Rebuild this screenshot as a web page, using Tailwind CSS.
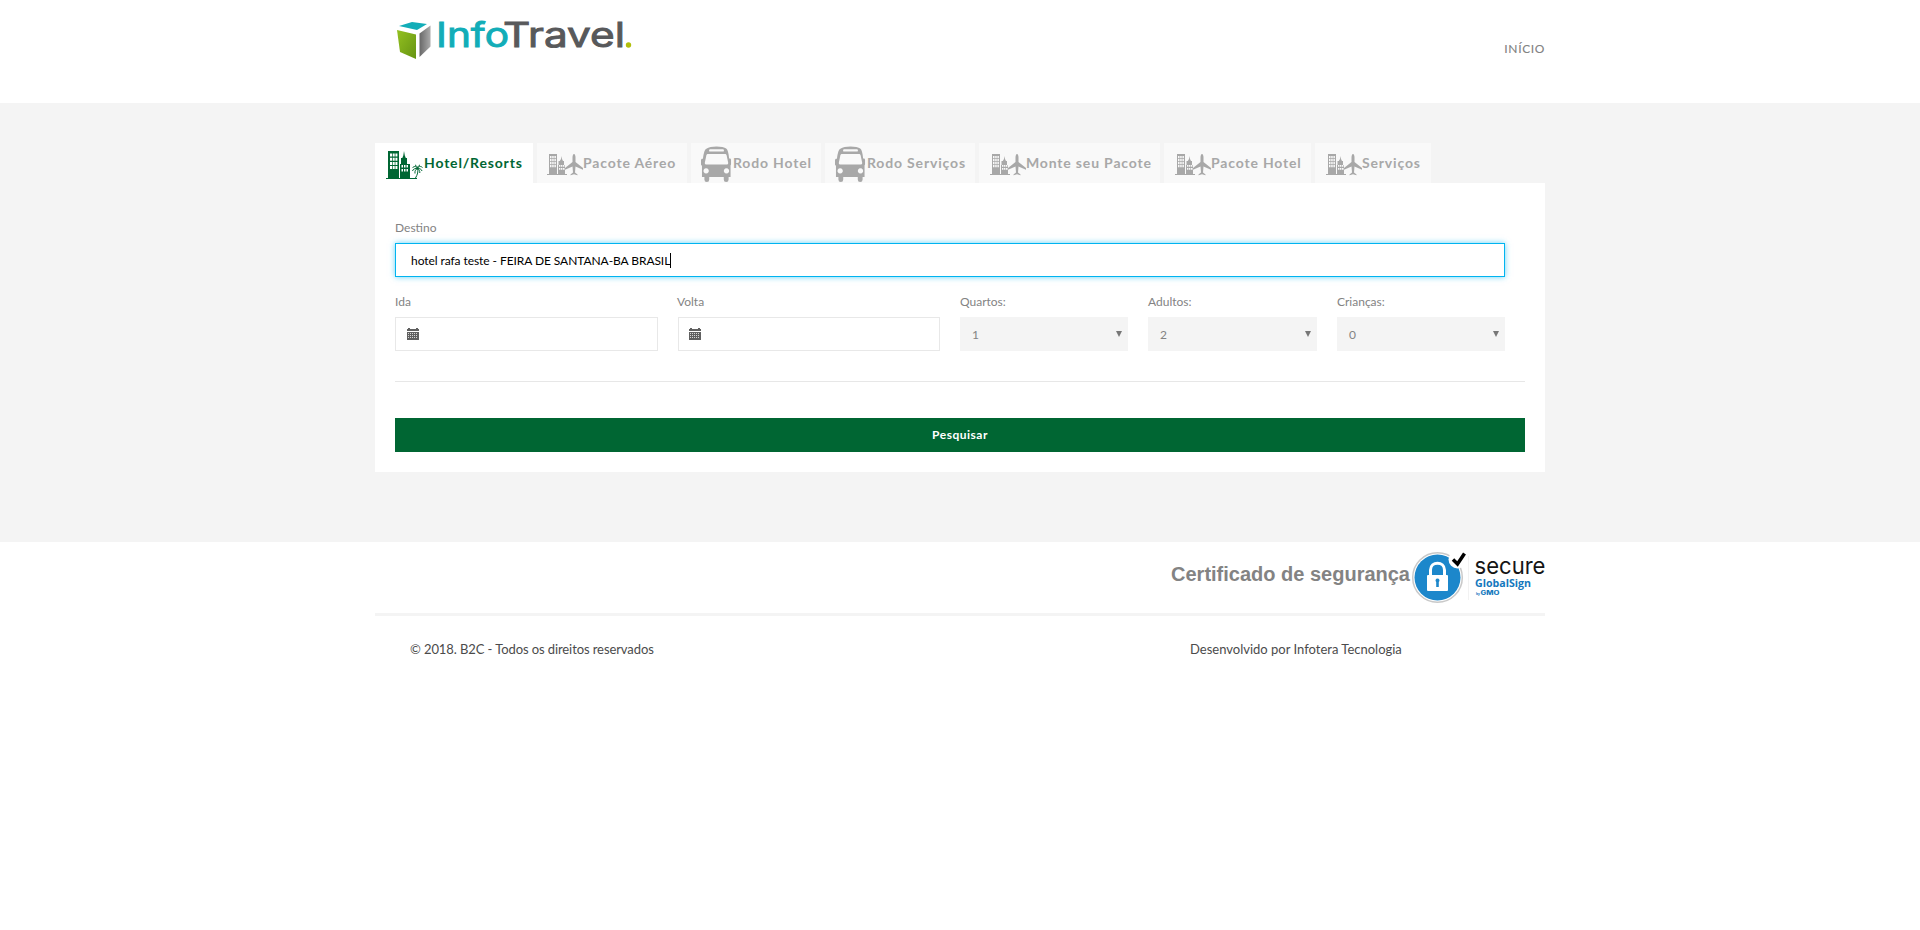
<!DOCTYPE html>
<html lang="pt-BR">
<head>
<meta charset="utf-8">
<title>InfoTravel</title>
<script src="https://cdn.jsdelivr.net/npm/@tailwindcss/browser@4"></script>
</head>
<body class="bg-white font-['Lato',sans-serif] text-[12px] text-[#838383]">
<svg width="0" height="0" class="absolute">
  <defs>
    <symbol id="city" viewBox="0 0 36 22">
      <path fill="currentColor" fill-rule="evenodd" d="M0 20h2V0h8v20h1v-9h.5V7h1.300L14 5l.5-3 .5 3 1 2h1v4h1v9h2v1H0zM3 2h1.500v2.200H3zm2.200 0h1.500v2.200H5.200zm2.200 0h1.500v2.200H7.400zM3 5h1.500v2.200H3zm2.200 0h1.500v2.200H5.200zm2.200 0h1.500v2.200H7.400zM3 8h1.500v2.200H3zm2.200 0h1.500v2.200H5.200zm2.200 0h1.500v2.200H7.400zM3 11h1.500v2.200H3zm2.200 0h1.500v2.200H5.200zm2.200 0h1.500v2.200H7.400zM12 11h1.400v1.800H12zm2 0h1.400v1.800H14zm2 0h1.400v1.800H16zm-4 3h1.400v1.800H12zm2 0h1.400v1.800H14zm2 0h1.400v1.800H16z"/>
      <path fill="currentColor" stroke="#f9f9f9" stroke-width=".6" paint-order="stroke" d="M27 0c1 0 1.500 2 1.500 3.500V8l7.500 6v1.700L28.500 12.500l-.5 6 2.500 2v.8L27 20.300l-3.500 1v-.8l2.500-2-.5-6L18 15.700V14l7.500-6V3.500C25.500 2 26 0 27 0z"/>
    </symbol>
    <symbol id="bus" viewBox="0 0 32 36">
      <path fill="currentColor" fill-rule="evenodd" d="M6 2.500C9-.2 23-.2 26 2.500c1.500 1.200 2 3.500 2.500 6 .2 1 .3 2.500.5 4 1.500-.3 2 .5 2 1.500v4c0 1-.3 1.300-.5 1.300V31h-2v2.500a2.500 2.500 0 0 1-5 0V31h-15v2.500a2.500 2.500 0 0 1-5 0V31H1V19.500c-.6 0-1-.5-1-1.300v-4c0-1 .6-1.700 2-1.500.3-2 .5-4 1-5.500C3.500 5 4 3.500 6 2.500zM9.500 3.200a1.200 1.200 0 0 0 0 2.400h13a1.200 1.200 0 0 0 0-2.400zM7.500 8C6 8 5.700 8.500 5.400 10L4 16.500c-.2 1.300.3 2 1.500 2h21c1.200 0 1.700-.7 1.500-2L26.600 10c-.3-1.500-.6-2-2.100-2zM5.300 22.200a2.700 2.700 0 1 0 .01 0zM26.300 22.200a2.700 2.700 0 1 0 .01 0z"/>
    </symbol>
    <symbol id="calendar" viewBox="0 0 12 12">
      <path fill="#606060" d="M0 1h1V0h2v1h6V0h2v1h1v2H0zM0 4h12v8H0z"/>
      <path stroke="#fff" stroke-opacity=".75" stroke-width="1" stroke-dasharray="1 1" d="M1 5.500h10M1 7.500h10M1 9.500h10"/>
    </symbol>
  </defs>
</svg>

<header class="h-[103px]">
  <div class="mx-auto flex w-[1170px] justify-between pt-5 pl-5">
    <svg class="overflow-visible" width="240" height="42" viewBox="0 0 240 42" aria-label="InfoTravel">
      <defs>
        <linearGradient id="green" x2="1" y2="1"><stop stop-color="#94c120"/><stop offset="1" stop-color="#669413"/></linearGradient>
        <linearGradient id="gray" x2="1"><stop stop-color="#686868"/><stop offset="1" stop-color="#aaa"/></linearGradient>
      </defs>
      <path fill="#12adb8" d="M4 6l13-4 15 2-10 6z"/>
      <path fill="url(#green)" d="M2 10l19 4.500V39L5 32z"/>
      <path fill="url(#gray)" d="M24.500 13.500l11-8v21L24.500 37z"/>
      <g font-family="Inter" font-size="33.500" font-weight="400" stroke-width=".9">
        <text x="41" y="27" textLength="73" lengthAdjust="spacingAndGlyphs" fill="#12adb8" stroke="#12adb8">Info</text>
        <text x="108" y="27" textLength="122" lengthAdjust="spacingAndGlyphs" fill="#58595b" stroke="#58595b">Travel</text>
      </g>
      <circle cx="233.500" cy="25" r="2.700" fill="#b1bf0c"/>
    </svg>
    <nav class="pt-[21px] text-[12px] leading-4 font-medium tracking-[0.6px]"><a>INÍCIO</a></nav>
  </div>
</header>

<main class="h-[439px] bg-[#f4f4f4] pt-10">
  <div class="mx-auto w-[1170px]">
    <div class="flex h-10 gap-1 text-[14px] font-bold tracking-[0.83px] text-[#a8a8a8]">
      <div class="flex w-[158px] items-center bg-white pl-[11px] text-[#006633]">
        <svg class="mt-1 mr-px shrink-0" width="37" height="30" viewBox="0 0 37 30">
          <path fill="currentColor" fill-rule="evenodd" d="M0 28h2V1h11v27h1V14h1V8h1.300l1-2.500L18 1l.8 4.500 1 2.500H21v6h3v14h7v1H0zM4 3.500h2v3H4zm2.700 0h2v3h-2zm2.700 0h2v3h-2zM4 7.700h2v3H4zm2.700 0h2v3h-2zm2.700 0h2v3h-2zM4 11.900h2v3H4zm2.700 0h2v3h-2zm2.700 0h2v3h-2zM4 16.100h2v3H4zm2.700 0h2v3h-2zm2.700 0h2v3h-2zM15.500 15H17v2.500h-1.500zm2.500 0h1.500v2.500H18zm2.500 0H22v2.500h-1.500zm-5 4H17v2.500h-1.500zm2.500 0h1.500v2.500H18zm2.500 0H22v2.500h-1.500z"/>
          <path fill="none" stroke="currentColor" stroke-width="1" d="M31.500 18.500c1 3 0 6-2 9.500M31.500 18.500c-1-2.500-4-2.500-5-.5M31.500 18.500c-2-.5-4.500.5-5 2.500M31.500 18.500c-1.500.5-3 2.500-2.500 5M31.500 18.500c1-2.500 3.500-2.500 5-1M31.500 18.500c2 0 4 .5 4.500 2.500M31.500 18.500c1.500 1 2.500 2.500 2.300 4.500M31.500 18.500c-.5-2-1-3-2.500-3.500M31.500 18.500c.5-2 1-3 2.500-3.500"/>
        </svg><span class="pb-0.5">Hotel/Resorts</span></div>
      <div class="flex w-[150px] items-center bg-[#f9f9f9] pl-[10px]"><svg class="mt-1 shrink-0" width="36" height="22"><use href="#city"/></svg><span class="pb-0.5">Pacote Aéreo</span></div>
      <div class="flex w-[130px] items-center bg-[#f9f9f9] pl-[10px]"><svg class="mt-[2px] mr-px shrink-0" width="31" height="36" viewBox="0 0 32 36" preserveAspectRatio="none"><use href="#bus"/></svg><span class="pb-0.5">Rodo Hotel</span></div>
      <div class="flex w-[150px] items-center bg-[#f9f9f9] pl-[10px]"><svg class="mt-[2px] mr-px shrink-0" width="31" height="36" viewBox="0 0 32 36" preserveAspectRatio="none"><use href="#bus"/></svg><span class="pb-0.5">Rodo Serviços</span></div>
      <div class="flex w-[181px] items-center bg-[#f9f9f9] pl-[11px]"><svg class="mt-1 shrink-0" width="36" height="22"><use href="#city"/></svg><span class="pb-0.5">Monte seu Pacote</span></div>
      <div class="flex w-[147px] items-center bg-[#f9f9f9] pl-[11px]"><svg class="mt-1 shrink-0" width="36" height="22"><use href="#city"/></svg><span class="pb-0.5">Pacote Hotel</span></div>
      <div class="flex w-[116px] items-center bg-[#f9f9f9] pl-[11px]"><svg class="mt-1 shrink-0" width="36" height="22"><use href="#city"/></svg><span class="pb-0.5">Serviços</span></div>
    </div>

    <form class="h-[289px] bg-white px-5 pt-[35px]">
      <div class="h-[25px] leading-5">Destino</div>
      <div class="flex h-[34px] w-[1110px] items-center border border-[#00b4f0] pl-[15px] text-black shadow-[0_0_6px_rgba(0,180,240,0.6)]">
        <span class="pt-0.5 tracking-[-0.07px]">hotel rafa teste - FEIRA DE SANTANA-BA BRASIL</span><span class="h-[15px] w-px bg-black"></span>
      </div>
      <div class="mt-[15px] flex w-[1110px]">
        <div class="mr-5 w-[263px]"><div class="h-[25px] leading-5">Ida</div><div class="flex h-[34px] items-center border border-[#e8e8e8] pl-[11px]"><svg width="12" height="12"><use href="#calendar"/></svg></div></div>
        <div class="mr-5 w-[262px]"><div class="-ml-px h-[25px] leading-5">Volta</div><div class="flex h-[34px] items-center border border-[#e8e8e8] pl-[10px]"><svg width="12" height="12"><use href="#calendar"/></svg></div></div>
        <div class="mr-5 w-[168px]"><div class="h-[25px] leading-5">Quartos:</div><div class="flex h-[34px] items-center justify-between bg-[#f4f4f4] pr-[6px] pl-3 text-[12px]"><span class="pt-0.5">1</span><svg width="6" height="6"><path d="M0 0h6L3 6z" fill="#777"/></svg></div></div>
        <div class="mr-5 w-[169px]"><div class="h-[25px] leading-5">Adultos:</div><div class="flex h-[34px] items-center justify-between bg-[#f4f4f4] pr-[6px] pl-3 text-[12px]"><span class="pt-0.5">2</span><svg width="6" height="6"><path d="M0 0h6L3 6z" fill="#777"/></svg></div></div>
        <div class="w-[168px]"><div class="h-[25px] leading-5">Crianças:</div><div class="flex h-[34px] items-center justify-between bg-[#f4f4f4] pr-[6px] pl-3 text-[12px]"><span class="pt-0.5">0</span><svg width="6" height="6"><path d="M0 0h6L3 6z" fill="#777"/></svg></div></div>
      </div>
      <hr class="mt-[30px] border-[#e7e7e7]">
      <button type="button" class="mt-9 block h-[34px] w-full bg-[#006633] text-[12px] font-bold tracking-[0.5px] text-white">Pesquisar</button>
    </form>
  </div>
</main>

<footer class="mx-auto w-[1170px]">
  <div class="flex h-[71px] justify-end">
    <div class="mr-[2px] pt-[18px] font-['Liberation_Sans',sans-serif] text-[20px] leading-7 font-bold text-[#838383]">Certificado de segurança</div>
    <svg class="mt-[9px] overflow-visible" width="133" height="54" viewBox="0 0 133 54" aria-label="Secure GlobalSign">
      <circle cx="25.500" cy="26.500" r="24.800" fill="#fff" stroke="#c9c9c9" stroke-width="1.500"/>
      <circle cx="25.500" cy="26.500" r="23" fill="#1c87cb"/>
      <circle cx="45.500" cy="8.500" r="9" fill="#fff"/>
      <path d="M41 8.500l4.500 4.500L52.500 2.500" fill="none" stroke="#000" stroke-width="3.500"/>
      <path d="M18.500 24v-5c0-9 14-9 14 0v5" fill="none" stroke="#fff" stroke-width="3"/>
      <rect x="15" y="24" width="21" height="16" rx="1" fill="#fff"/>
      <path d="M25.500 27.500a2 2 0 0 1 1.300 3.500v5h-2.600v-5a2 2 0 0 1 1.300-3.500z" fill="#1c87cb"/>
      <path d="M56.500 5v44" stroke="#f2f2f2"/>
      <text x="62.500" y="22.500" textLength="71" lengthAdjust="spacingAndGlyphs" font-family="Inter" font-size="23" fill="#151515">secure</text>
      <text x="63" y="35.500" textLength="56" lengthAdjust="spacingAndGlyphs" font-family="Open Sans" font-size="11" font-weight="700" fill="#1478bd">GlobalSign</text>
      <text x="64" y="43.500" textLength="4" lengthAdjust="spacingAndGlyphs" font-family="Open Sans" font-size="4" font-weight="700" fill="#1478bd">by</text>
      <text x="68.500" y="43.500" textLength="19" lengthAdjust="spacingAndGlyphs" font-family="Inter" font-size="5.500" font-weight="800" fill="#1478bd">GMO</text>
    </svg>
  </div>
  <div class="h-[3px] bg-[#f4f4f4]"></div>
  <div class="flex pt-[23px] text-[13px] leading-5 text-[#4b4b4b]">
    <div class="w-[780px] pl-[35px] tracking-[-0.09px]">© 2018. B2C - Todos os direitos reservados</div>
    <div class="pl-[35px]">Desenvolvido por Infotera Tecnologia</div>
  </div>
</footer>
</body>
</html>
